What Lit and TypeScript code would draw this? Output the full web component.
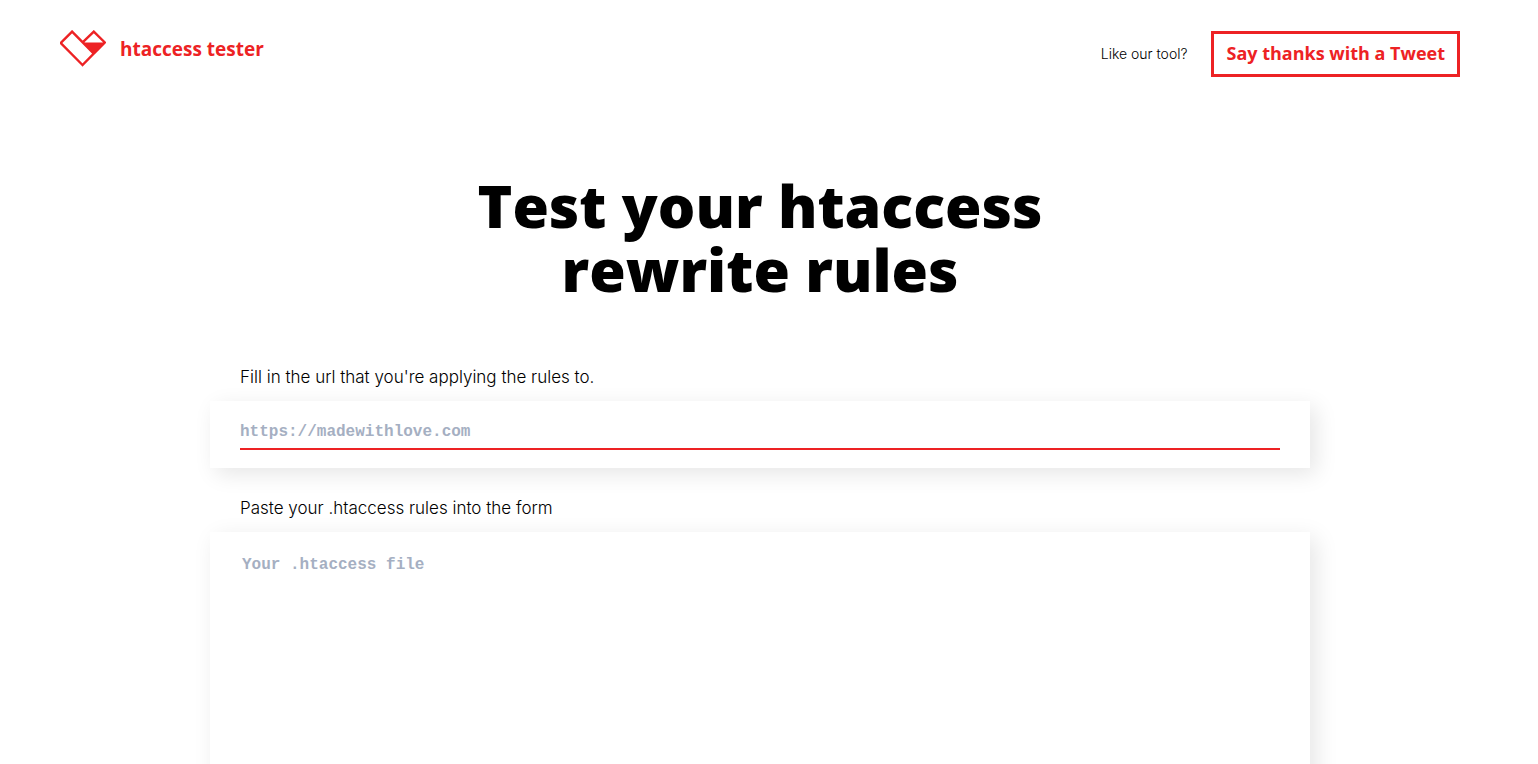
import { LitElement, html, css } from "lit";
import { customElement } from "lit/decorators.js";

@customElement("app-root")
export class AppRoot extends LitElement {
  static styles = css`
    :host {
      display: block;
      height: 100vh;
      overflow-y: auto;
      scrollbar-width: none;
      box-sizing: border-box;
      padding-right: 18px;
      background: #fff;
      color: #000;
      font-family: Inter, sans-serif;
      font-weight: 300;
      font-size: 17px;
      line-height: 24px;
    }
    * {
      box-sizing: border-box;
    }
    .header {
      display: flex;
      justify-content: space-between;
      padding: 30px 60px 0;
    }
    .brand,
    .tweet,
    .title {
      font-family: "Open Sans", sans-serif;
      font-weight: 700;
    }
    .brand,
    .tweet {
      color: #ed2224;
      text-decoration: none;
    }
    .brand {
      display: flex;
      align-items: center;
      align-self: flex-start;
      gap: 14px;
      font-size: 19px;
    }
    .logo {
      display: block;
      width: 46px;
      height: 37px;
    }
    .thanks {
      display: flex;
      align-items: center;
      gap: 24px;
      padding-top: 1px;
      font-size: 14px;
    }
    .tweet {
      padding: 7px 12px 9px;
      border: 3px solid #ed2224;
      font-size: 18px;
    }
    .title {
      margin: 96px 0 0;
      font-size: 59px;
      line-height: 64px;
      font-weight: 800;
      text-align: center;
    }
    .form {
      display: grid;
      max-width: 1160px;
      margin: 0 auto;
      padding: 64px 30px 60px;
    }
    .label {
      padding: 0 30px 12px;
    }
    .card {
      margin-bottom: 28px;
      padding: 18px 30px;
      background: #fff;
      box-shadow: 6px 6px 22px rgba(0, 0, 0, 0.1);
    }
    .field {
      display: block;
      width: 100%;
      border: 0;
      border-radius: 0;
      outline: 0;
      background: transparent;
      color: #4a5568;
      font: bold 16px/24px "Liberation Mono", monospace;
    }
    .field::placeholder {
      color: #a5afc2;
      opacity: 1;
    }
    .url {
      height: 31px;
      padding: 1px 0 4px;
      border-bottom: 2px solid #ed2224;
    }
    .rules {
      padding: 3px 2px;
      resize: none;
    }
  `;

  render() {
    return html`
      <header class="header">
        <a class="brand" href="#">
          <svg class="logo" viewBox="0 0 46 37" fill="none" aria-hidden="true">
            <path d="M22.5 35 0.8 13 12.1 1.6 33.8 23.6Z M22.6 12.4 33.8 1.6 44.8 12.4 33.8 23.6" stroke="#ed2224" stroke-width="2.4" />
            <path d="M22.6 12.4H45L33.8 24Z" fill="#ed2224" />
          </svg>
          <span>htaccess tester</span>
        </a>
        <div class="thanks">
          <span>Like our tool?</span>
          <a class="tweet" href="#">Say thanks with a Tweet</a>
        </div>
      </header>
      <main>
        <h1 class="title">Test your htaccess<br />rewrite rules</h1>
        <form class="form">
          <label class="label" for="url">Fill in the url that you're applying the rules to.</label>
          <div class="card">
            <input class="field url" id="url" type="url" placeholder="https://madewithlove.com" />
          </div>
          <label class="label" for="rules">Paste your .htaccess rules into the form</label>
          <div class="card">
            <textarea class="field rules" id="rules" rows="14" placeholder="Your .htaccess file"></textarea>
          </div>
        </form>
      </main>
    `;
  }
}
